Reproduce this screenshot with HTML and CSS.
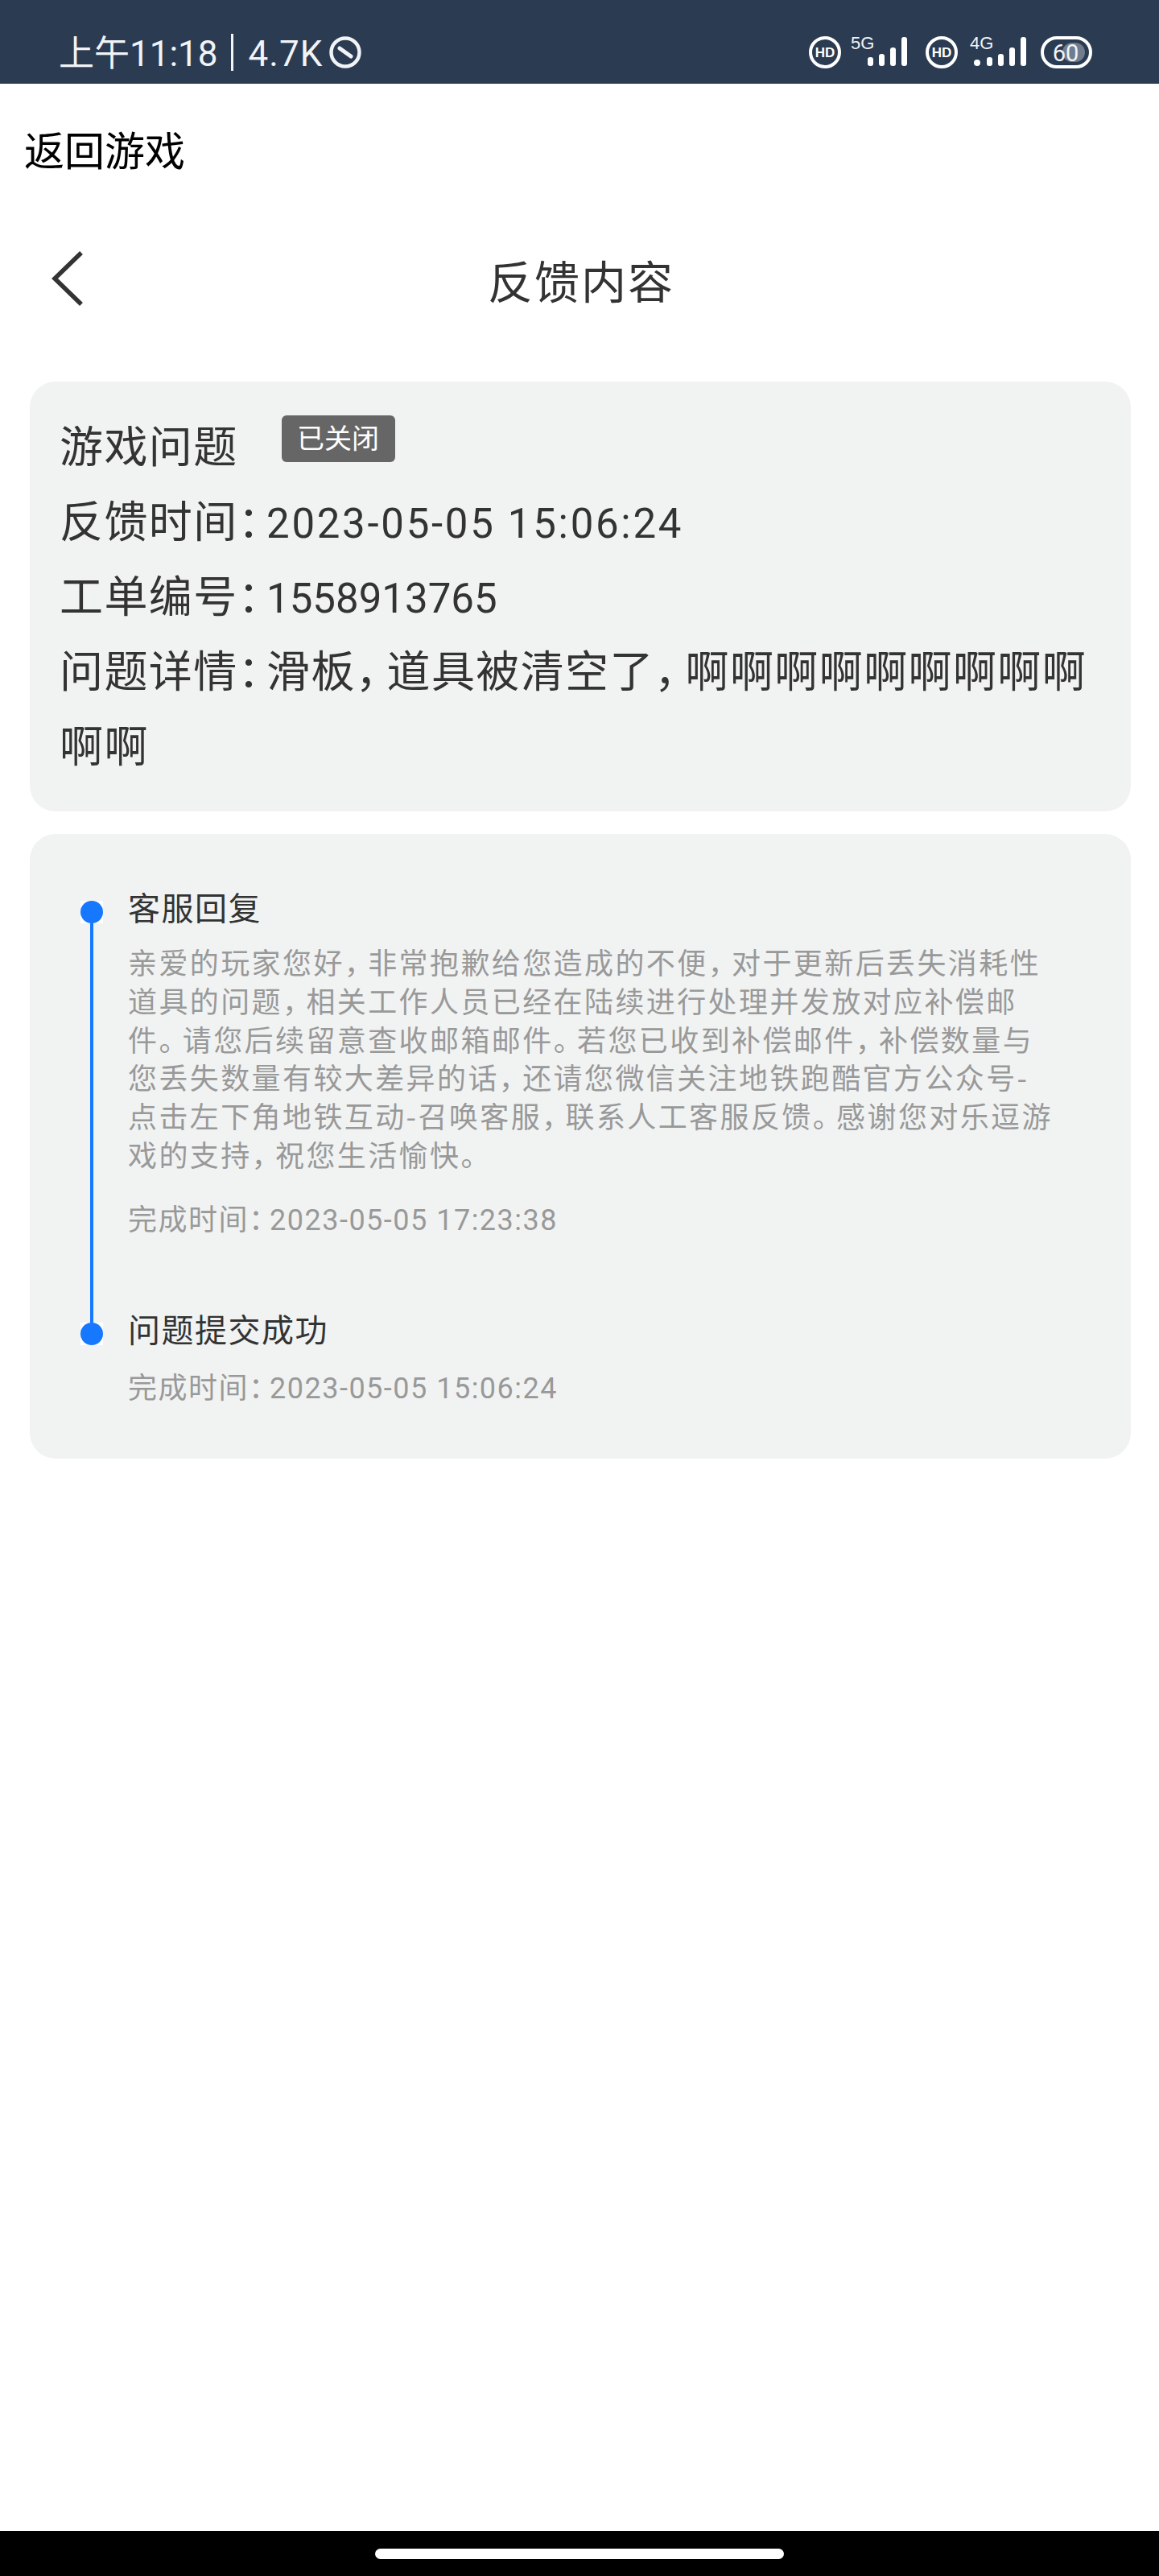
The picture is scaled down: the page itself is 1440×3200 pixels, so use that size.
FILE: index.html
```html
<!DOCTYPE html>
<html lang="zh-CN">
<head>
  <meta charset="UTF-8" />
  <title>反馈内容</title>
  <link rel="stylesheet" href="styles.css">
</head>
<body>
  <div class="status-bar">
    <div class="status-left">
      <span class="clock">上午11:18</span>
      <span class="sep"></span>
      <span class="speed">4.7K</span>
      <svg class="dnd" width="40" height="40" viewBox="0 0 40 40">
        <circle cx="20" cy="20" r="17.5" fill="none" stroke="#f1f3f6" stroke-width="4.5"/>
        <path d="M13 15 L27 25" stroke="#f1f3f6" stroke-width="5" stroke-linecap="round"/>
      </svg>
    </div>
    <div class="status-right">
      <svg class="hd" width="40" height="40" viewBox="0 0 40 40">
        <circle cx="20" cy="20" r="18" fill="none" stroke="#fff" stroke-width="4"/>
        <text x="20" y="26" text-anchor="middle" class="hd-text">HD</text>
      </svg>
      <svg class="signal" width="70" height="40" viewBox="0 0 70 40">
        <text x="0" y="16" class="net-text">5G</text>
        <rect x="21" y="26" width="7" height="11" rx="3" fill="#fff"/>
        <rect x="35" y="22" width="7" height="15" rx="3" fill="#fff"/>
        <rect x="49" y="14" width="7" height="23" rx="3" fill="#fff"/>
        <rect x="63" y="1" width="7" height="36" rx="3" fill="#fff"/>
      </svg>
      <svg class="hd" width="40" height="40" viewBox="0 0 40 40">
        <circle cx="20" cy="20" r="18" fill="none" stroke="#fff" stroke-width="4"/>
        <text x="20" y="26" text-anchor="middle" class="hd-text">HD</text>
      </svg>
      <svg class="signal" width="70" height="40" viewBox="0 0 70 40">
        <text x="0" y="16" class="net-text">4G</text>
        <circle cx="9" cy="33" r="4" fill="#fff"/>
        <rect x="21" y="26" width="7" height="11" rx="3" fill="#fff"/>
        <rect x="35" y="22" width="7" height="15" rx="3" fill="#fff"/>
        <rect x="49" y="14" width="7" height="23" rx="3" fill="#fff"/>
        <rect x="63" y="1" width="7" height="36" rx="3" fill="#fff"/>
      </svg>
      <svg class="battery" width="64" height="40" viewBox="0 0 64 40">
        <rect x="27" y="8" width="28" height="24" rx="12" fill="#6f7d8f"/>
        <rect x="2" y="2" width="60" height="36" rx="18" fill="none" stroke="#fff" stroke-width="4"/>
        <text x="31" y="31" text-anchor="middle" class="bat-text">60</text>
      </svg>
    </div>
  </div>

  <div class="back-game">返回游戏</div>

  <div class="title-bar">
    <svg class="back-icon" width="44" height="70" viewBox="0 0 44 70">
      <path d="M39 3 L6 35 L39 67" fill="none" stroke="#333" stroke-width="5.5"/>
    </svg>
    <h1>反馈内容</h1>
  </div>

  <div class="content">
    <div class="card info-card">
      <div class="info-head">游戏问题<span class="badge">已关闭</span></div>
      <div>反馈时间<span class="colon">：</span><span class="num date">2023-05-05 15:06:24</span></div>
      <div>工单编号<span class="colon">：</span><span class="num">1558913765</span></div>
      <div>问题详情<span class="colon">：</span>滑板<span class="pc">，</span>道具被清空了<span class="pc">，</span>啊啊啊啊啊啊啊啊啊<br>啊啊</div>
    </div>

    <div class="card timeline">
      <div class="step">
        <div class="marker"><span class="dot"></span><span class="line"></span></div>
        <div class="step-body">
          <div class="step-title">客服回复</div>
          <p class="reply">亲爱的玩家您好<span class="pc">，</span>非常抱歉给您造成的不便<span class="pc">，</span>对于更新后丢失消耗性<br>道具的问题<span class="pc">，</span>相关工作人员已经在陆续进行处理并发放对应补偿邮<br>件<span class="pc">。</span>请您后续留意查收邮箱邮件<span class="pc">。</span>若您已收到补偿邮件<span class="pc">，</span>补偿数量与<br>您丢失数量有较大差异的话<span class="pc">，</span>还请您微信关注地铁跑酷官方公众号-<br>点击左下角地铁互动-召唤客服<span class="pc">，</span>联系人工客服反馈<span class="pc">。</span>感谢您对乐逗游<br>戏的支持<span class="pc">，</span>祝您生活愉快<span class="pc">。</span></p>
          <div class="done-time">完成时间<span class="colon">：</span><span class="num">2023-05-05 17:23:38</span></div>
        </div>
      </div>
      <div class="step last">
        <div class="marker"><span class="dot"></span></div>
        <div class="step-body">
          <div class="step-title">问题提交成功</div>
          <div class="done-time">完成时间<span class="colon">：</span><span class="num">2023-05-05 15:06:24</span></div>
        </div>
      </div>
    </div>
  </div>

  <div class="nav-bar"><span class="home-pill"></span></div>
</body>
</html>
```

FILE: styles.css
```css
* {
  box-sizing: border-box;
}

body {
  margin: 0;
  width: 1440px;
  height: 3200px;
  display: flex;
  flex-direction: column;
  background: #fff;
  color: #333;
  font-family: "Noto Sans CJK SC", "Noto Sans", sans-serif;
  overflow: hidden;
}

/* status bar */
.status-bar {
  height: 104px;
  flex-shrink: 0;
  background: #2a3b52;
  display: flex;
  justify-content: space-between;
  align-items: center;
  padding: 26px 83px 0 73px;
  color: #f1f3f6;
}

.status-left {
  display: flex;
  align-items: center;
  font-family: Roboto, "Noto Sans CJK SC", sans-serif;
  font-size: 44px;
  line-height: 48px;
}

.clock,
.speed {
  padding-top: 3px;
}

.sep {
  width: 3px;
  height: 46px;
  background: #f1f3f6;
  margin: 0 19px 0 16px;
}

.speed {
  letter-spacing: 1px;
}

.dnd {
  margin-left: 8px;
}

.status-right {
  display: flex;
  align-items: center;
}

.signal {
  margin-left: 12px;
  overflow: visible;
}

.signal + .hd {
  margin-left: 23px;
}

.signal:nth-child(4) {
  margin-left: 15px;
}

.battery {
  margin-left: 18px;
}

.hd-text {
  font: 700 17px "Liberation Sans", sans-serif;
  fill: #fff;
}

.net-text {
  font: 400 22px "Liberation Sans", sans-serif;
  fill: #f1f3f6;
}

.bat-text {
  font: 400 29px Roboto, sans-serif;
  fill: #f1f3f6;
}

/* header rows */
.back-game {
  height: 72px;
  margin-top: 44px;
  padding-left: 30px;
  font-size: 50px;
  line-height: 72px;
  color: #000;
  flex-shrink: 0;
}

.title-bar {
  height: 90px;
  margin-top: 81px;
  position: relative;
  display: flex;
  align-items: center;
  justify-content: center;
  flex-shrink: 0;
}

.title-bar h1 {
  margin: 0;
  font-size: 56px;
  font-weight: 400;
  letter-spacing: 2px;
  color: #333;
  padding-left: 4px;
}

.back-icon {
  position: absolute;
  left: 62px;
  top: 10px;
}

/* cards */
.content {
  flex: 1;
  padding: 83px 35px 0 37px;
  display: flex;
  flex-direction: column;
  gap: 28px;
}

.card {
  background: #f1f3f3;
  border-radius: 32px;
}

.info-card {
  padding: 31px 37px 38px;
  font-size: 54px;
  line-height: 93px;
  letter-spacing: 1.4px;
  color: #333;
}

.badge {
  display: inline-block;
  width: 141px;
  height: 58px;
  margin-left: 54px;
  border-radius: 6px;
  background: #666;
  color: #fff;
  font-size: 34px;
  line-height: 54px;
  letter-spacing: 0;
  text-align: center;
  vertical-align: 18px;
}

.num {
  font-family: Roboto, sans-serif;
  line-height: 1;
}

.info-card .num {
  font-size: 51px;
  letter-spacing: 0;
}

.info-card .date {
  letter-spacing: 2.7px;
}

/* full-width marks sit in half a box here, plus a little air */
.pc,
.colon {
  font-feature-settings: "halt";
}

.pc {
  margin-right: .25em;
}

.colon {
  margin-right: .13em;
}

.info-card .pc {
  margin-right: .19em;
}

/* timeline */
.timeline {
  padding: 65px 40px 65px 63px;
}

.step {
  display: flex;
  gap: 31px;
}

.marker {
  width: 28px;
  flex-shrink: 0;
  padding-top: 18px;
  display: flex;
  flex-direction: column;
  align-items: center;
}

/* the dot image has a white square behind the circle */
.dot {
  width: 28px;
  height: 28px;
  flex-shrink: 0;
  background: #fff;
}

.dot::before {
  content: "";
  display: block;
  height: 100%;
  border-radius: 50%;
  background: #1677ff;
}

.line {
  flex: 1;
  width: 4px;
  margin-bottom: -18px;
  background: #1677ff;
}

.step-body {
  flex: 1;
  padding-bottom: 89px;
}

.step.last .step-body {
  padding-bottom: 2px;
}

.step-title {
  font-size: 40px;
  line-height: 50px;
  margin-bottom: 6px;
  letter-spacing: 1.5px;
  color: #333;
}

.reply {
  margin: 20px 0 0;
  font-size: 36px;
  line-height: 47.8px;
  letter-spacing: 2.4px;
  color: #999;
}

.done-time {
  margin-top: 30px;
  font-size: 36px;
  line-height: 48px;
  letter-spacing: 1.5px;
  color: #999;
}

.done-time .colon {
  margin-right: .18em;
}

.step.last .done-time {
  margin-top: 22px;
}

/* bottom nav */
.nav-bar {
  height: 56px;
  flex-shrink: 0;
  background: #000;
  display: flex;
  justify-content: center;
  padding: 22px 0 0 0;
}

.home-pill {
  width: 508px;
  height: 13px;
  border-radius: 7px;
  background: #fff;
}
```
